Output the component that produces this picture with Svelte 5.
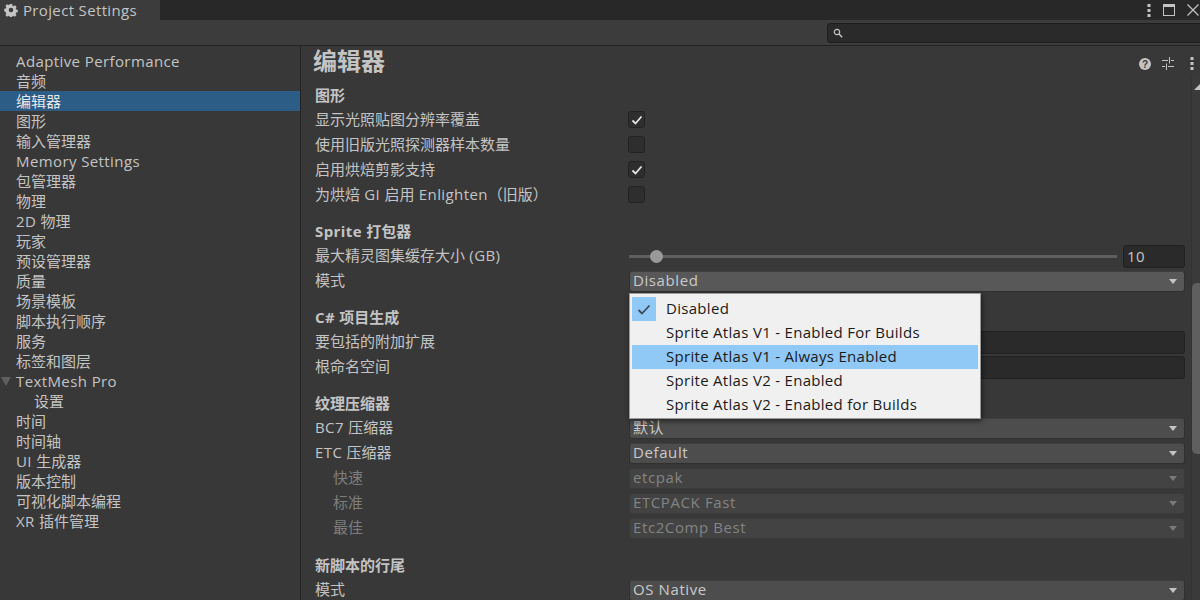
<script>
  const nav = [
    ['Adaptive Performance'], ['音频'], ['编辑器', 'sel'], ['图形'], ['输入管理器'], ['Memory Settings'],
    ['包管理器'], ['物理'], ['2D 物理'], ['玩家'], ['预设管理器'], ['质量'], ['场景模板'], ['脚本执行顺序'],
    ['服务'], ['标签和图层'], ['TextMesh Pro', 'fold'], ['设置', 'sub'], ['时间'], ['时间轴'], ['UI 生成器'],
    ['版本控制'], ['可视化脚本编程'], ['XR 插件管理']
  ];
  const options = [
    { t: 'Disabled', check: true },
    { t: 'Sprite Atlas V1 - Enabled For Builds' },
    { t: 'Sprite Atlas V1 - Always Enabled', hover: true },
    { t: 'Sprite Atlas V2 - Enabled' },
    { t: 'Sprite Atlas V2 - Enabled for Builds' }
  ];
  const runs = (s) => s.split(/([\u0020-\u024f]+)/);
</script>

{#snippet mixed(s)}{#each runs(s) as part, i}{#if i % 2}<span class="lat">{part}</span>{:else}{part}{/if}{/each}{/snippet}

{#snippet tickmark()}<svg width="12" height="10" viewBox="0 0 12 10"><path d="M1.500 5.500l3 3 6-7" stroke="#e6e6e6" stroke-width="1.800" fill="none"/></svg>{/snippet}

<div class="win">
  <header class="titlebar">
    <div class="tab">
      <svg class="gear" width="14" height="14" viewBox="0 0 14 14"><path fill="#c4c4c4" fill-rule="evenodd" d="M5.800 1h2.400l.3 1.700 1 .5 1.500-.9 1.600 1.700-.9 1.400.4 1.100 1.700.3v2.400l-1.700.3-.4 1-.1.1.9 1.400-1.600 1.700-1.500-.9-1 .4-.3 1.700H5.800l-.3-1.700-1-.4-1.500.9-1.600-1.700.9-1.400-.4-1.100L.2 8.100V5.700l1.700-.3.4-1.100-.9-1.400L3 1.200l1.500.9 1-.4zM7 4.700a2.300 2.300 0 1 0 0 4.600 2.300 2.300 0 0 0 0-4.600z"/></svg>
      <span>Project Settings</span>
    </div>
    <div class="winbtns">
      <svg width="4" height="13" viewBox="0 0 4 13"><g fill="#c4c4c4"><rect x="0.500" y="0" width="3" height="3"/><rect x="0.500" y="5" width="3" height="3"/><rect x="0.500" y="10" width="3" height="3"/></g></svg>
      <svg width="12" height="12" viewBox="0 0 12 12"><rect x=".5" y=".5" width="11" height="11" fill="none" stroke="#c4c4c4"/><rect x="0" y="0" width="12" height="3" fill="#c4c4c4"/></svg>
      <svg width="12" height="12" viewBox="0 0 12 12"><path d="M.5.5l11 11M11.500.5l-11 11" stroke="#c4c4c4" stroke-width="1.200" fill="none"/></svg>
    </div>
  </header>

  <div class="toolbar">
    <div class="search">
      <svg width="10" height="10" viewBox="0 0 10 10"><circle cx="4" cy="4" r="2.700" fill="none" stroke="#c8c8c8" stroke-width="1.200"/><path d="M6 6l3.200 3.200" stroke="#c8c8c8" stroke-width="1.400"/></svg>
    </div>
  </div>

  <div class="body">
    <nav class="side">
      {#each nav as [label, kind]}
        <div class="item {kind ?? ''}">
          {#if kind === 'fold'}<span class="foldtri"></span>{/if}
          {@render mixed(label)}
        </div>
      {/each}
    </nav>

    <main class="panel">
      <div class="titlerow">
        <h1>编辑器</h1>
        <div class="tools">
          <svg width="12" height="12" viewBox="0 0 12 12"><circle cx="6" cy="6" r="6" fill="#c4c4c4"/><text x="6" y="10" text-anchor="middle" class="q">?</text></svg>
          <svg width="12" height="13" viewBox="0 0 12 13"><g stroke="#c4c4c4" stroke-width="1" fill="none"><path d="M0 3.500h6M9 3.500h3M0 9.500h3M6 9.500h6M7.500 0v6.500M4.500 6.500V13"/></g></svg>
          <svg class="dots" width="4" height="13" viewBox="0 0 4 13"><g fill="#c4c4c4"><rect x="0.500" y="0" width="3" height="3"/><rect x="0.500" y="5" width="3" height="3"/><rect x="0.500" y="10" width="3" height="3"/></g></svg>
        </div>
      </div>

      <section>
        <h2>图形</h2>
        <div class="row"><label>显示光照贴图分辨率覆盖</label><span class="check">{@render tickmark()}</span></div>
        <div class="row"><label>使用旧版光照探测器样本数量</label><span class="check"></span></div>
        <div class="row"><label>启用烘焙剪影支持</label><span class="check">{@render tickmark()}</span></div>
        <div class="row"><label>{@render mixed('为烘焙 GI 启用 Enlighten（旧版）')}</label><span class="check"></span></div>
      </section>

      <section>
        <h2>{@render mixed('Sprite 打包器')}</h2>
        <div class="row"><label>{@render mixed('最大精灵图集缓存大小 (GB)')}</label>
          <div class="slider"><div class="track"><span class="thumb"></span></div><div class="num">10</div></div>
        </div>
        <div class="row"><label>模式</label><div class="drop hot"><span>Disabled</span><i></i></div></div>
      </section>

      <section>
        <h2>{@render mixed('C# 项目生成')}</h2>
        <div class="row"><label>要包括的附加扩展</label><div class="field"></div></div>
        <div class="row"><label>根命名空间</label><div class="field"></div></div>
      </section>

      <section class="wide">
        <h2>纹理压缩器</h2>
        <div class="row"><label>{@render mixed('BC7 压缩器')}</label><div class="drop"><span>默认</span><i></i></div></div>
        <div class="row"><label>{@render mixed('ETC 压缩器')}</label><div class="drop"><span>Default</span><i></i></div></div>
        <div class="row dim"><label>快速</label><div class="drop"><span>etcpak</span><i></i></div></div>
        <div class="row dim"><label>标准</label><div class="drop"><span>ETCPACK Fast</span><i></i></div></div>
        <div class="row dim"><label>最佳</label><div class="drop"><span>Etc2Comp Best</span><i></i></div></div>
      </section>

      <section>
        <h2>新脚本的行尾</h2>
        <div class="row"><label>模式</label><div class="drop"><span>OS Native</span><i></i></div></div>
      </section>
    </main>
  </div>

  <div class="scrollbar">
    <span class="arrow"></span>
    <span class="sthumb"></span>
  </div>

  <div class="popup">
    {#each options as o}
      <div class="opt" class:hover={o.hover}>
        {#if o.check}
          <span class="tick"><svg width="14" height="11" viewBox="0 0 14 11"><path d="M1.500 6l3.500 3.500 7.500-8" stroke="#3d4a58" stroke-width="1.800" fill="none"/></svg></span>
        {/if}
        <span class="txt">{o.t}</span>
      </div>
    {/each}
  </div>
</div>

<style>
  :global(body) { margin: 0; background: #383838; }
  .win {
    position: relative; width: 1200px; height: 600px; overflow: hidden; background: #383838; color: #c4c4c4;
    font: 15px/20px "Open Sans", "Noto Sans CJK SC", sans-serif;
  }
  .lat { letter-spacing: .4px; }
  .titlebar { height: 20px; background: #282828; display: flex; justify-content: space-between; }
  .tab { width: 160px; background: #3c3c3c; display: flex; align-items: center; gap: 5px; padding-left: 4px; box-sizing: border-box; font-size: 15px; letter-spacing: .35px; }
  .gear { flex: none; }
  .winbtns { display: flex; align-items: center; gap: 12px; padding-right: 1px; }
  .toolbar { height: 26px; box-sizing: border-box; background: #3c3c3c; border-bottom: 1px solid #232323; display: flex; justify-content: flex-end; align-items: center; }
  .search { width: 373px; height: 20px; box-sizing: border-box; background: #2a2a2a; border: 1px solid #1e1e1e; border-right: 0; border-radius: 4px 0 0 4px; display: flex; align-items: center; padding-left: 5px; }
  .body { display: flex; height: 554px; }
  .side { width: 301px; flex: none; box-sizing: border-box; padding-top: 5px; border-right: 1px solid #232323; }
  .item { height: 20px; line-height: 20px; padding-left: 16px; position: relative; }
  .item.sel { background: #2c5d87; color: #e8e8e8; }
  .item.sub { padding-left: 34px; }
  .foldtri { position: absolute; left: 1px; top: 6px; width: 0; height: 0; border-left: 5px solid transparent; border-right: 5px solid transparent; border-top: 9px solid #5f5f5f; }
  .panel { flex: 1; min-width: 0; box-sizing: border-box; padding-left: 14px; padding-right: 15px; }
  .titlerow { height: 38px; display: flex; justify-content: space-between; position: relative; }
  h1 { margin: 0 0 0 -2px; font-size: 24px; line-height: 30px; font-weight: 700; color: #c4c4c4; }
  .tools { position: absolute; right: -9px; top: 11px; display: flex; align-items: center; gap: 11px; }
  .dots { margin-left: 5px; }
  .q { font: 700 10px "Liberation Sans", sans-serif; fill: #383838; }
  section { margin-bottom: 12px; }
  section.wide { margin-bottom: 13px; }
  h2 { margin: 0; height: 24px; line-height: 22px; font-size: 15px; font-weight: 700; color: #c4c4c4; }
  .row { height: 25px; display: flex; align-items: center; }
  label { width: 314px; flex: none; padding-bottom: 4px; }
  .row.dim label { padding-left: 18px; width: 296px; color: #7e7e7e; }
  .check { width: 17px; height: 17px; box-sizing: border-box; margin: -2px 0 0 -1px; border-radius: 3px; background: #2e2e2e; border: 1px solid #232323; display: flex; align-items: center; justify-content: center; }
  .drop { flex: 1; height: 21px; box-sizing: border-box; background: #4d4d4d; border: 1px solid #303030; border-top-color: #3e3e3e; border-radius: 3px; display: flex; align-items: center; justify-content: space-between; padding: 0 7px 0 3px; color: #cacaca; letter-spacing: .6px; }
  .drop span { margin-top: -3px; }
  .drop.hot { background: #585858; }
  .drop i { width: 0; height: 0; border-left: 4.500px solid transparent; border-right: 4.500px solid transparent; border-top: 5px solid #c4c4c4; }
  .row.dim .drop { background: #434343; border-color: #3a3a3a; color: #838383; }
  .row.dim .drop i { border-top-color: #7a7a7a; }
  .field { flex: 1; height: 23px; box-sizing: border-box; background: #2a2a2a; border: 1px solid #212121; border-radius: 3px; }
  .slider { flex: 1; display: flex; align-items: center; gap: 6px; }
  .track { flex: 1; height: 3px; background: #5e5e5e; position: relative; }
  .thumb { position: absolute; left: 21px; top: -5px; width: 13px; height: 13px; border-radius: 50%; background: #999; }
  .num { width: 62px; height: 23px; box-sizing: border-box; background: #2a2a2a; border: 1px solid #212121; border-radius: 3px; padding-left: 3px; line-height: 21px; letter-spacing: .4px; }
  .scrollbar { position: absolute; right: 0; top: 77px; bottom: 0; width: 9px; background: #3a3a3a; border-left: 1px solid #333; box-sizing: border-box; }
  .arrow { position: absolute; left: 2px; top: 7px; width: 0; height: 0; border-left: 6px solid transparent; border-right: 6px solid transparent; border-bottom: 6px solid #c4c4c4; }
  .sthumb { position: absolute; left: 0; top: 206px; right: 0; height: 171px; background: #5f5f5f; border-radius: 5px 0 0 5px; }
  .popup { position: absolute; left: 629px; top: 293px; width: 352px; height: 126px; box-sizing: border-box; padding: 3px 2px; background: #f0f0f0; border: 1px solid #9a9a9a; box-shadow: 1px 2px 5px rgba(0,0,0,.55); color: #1a1a1a; }
  .opt { height: 24px; line-height: 22px; position: relative; padding-left: 34px; letter-spacing: .3px; }
  .opt.hover { background: #90c8f6; }
  .tick { position: absolute; left: 0; top: 0; width: 24px; height: 24px; background: #90c8f6; display: flex; align-items: center; justify-content: center; }
</style>
